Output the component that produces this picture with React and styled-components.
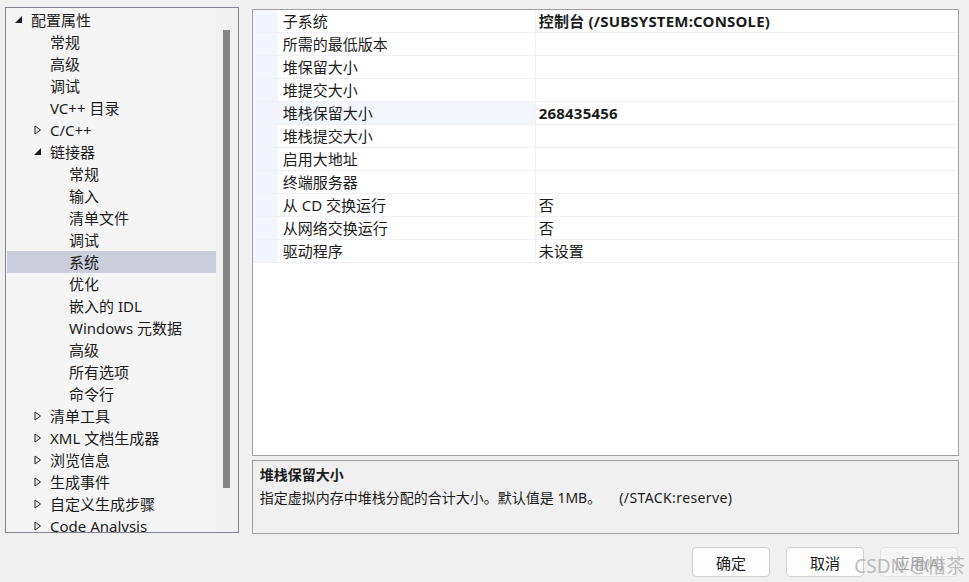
import React from 'react';
import styled, { createGlobalStyle } from 'styled-components';

const GlobalStyle = createGlobalStyle`
  html, body {
    margin: 0;
    padding: 0;
    background: #f0f0f0;
  }
  body {
    font-family: "Noto Sans", "Noto Sans CJK SC", sans-serif;
    font-size: 15px;
    color: #1b1b1b;
  }
`;

const treeItems = [
  { label: '配置属性', level: 0, arrow: 'open' },
  { label: '常规', level: 1 },
  { label: '高级', level: 1 },
  { label: '调试', level: 1 },
  { label: 'VC++ 目录', level: 1 },
  { label: 'C/C++', level: 1, arrow: 'closed' },
  { label: '链接器', level: 1, arrow: 'open' },
  { label: '常规', level: 2 },
  { label: '输入', level: 2 },
  { label: '清单文件', level: 2 },
  { label: '调试', level: 2 },
  { label: '系统', level: 2, selected: true },
  { label: '优化', level: 2 },
  { label: '嵌入的 IDL', level: 2 },
  { label: 'Windows 元数据', level: 2 },
  { label: '高级', level: 2 },
  { label: '所有选项', level: 2 },
  { label: '命令行', level: 2 },
  { label: '清单工具', level: 1, arrow: 'closed' },
  { label: 'XML 文档生成器', level: 1, arrow: 'closed' },
  { label: '浏览信息', level: 1, arrow: 'closed' },
  { label: '生成事件', level: 1, arrow: 'closed' },
  { label: '自定义生成步骤', level: 1, arrow: 'closed' },
  { label: 'Code Analysis', level: 1, arrow: 'closed' },
];

const properties = [
  { name: '子系统', value: '控制台 (/SUBSYSTEM:CONSOLE)', bold: true },
  { name: '所需的最低版本', value: '' },
  { name: '堆保留大小', value: '' },
  { name: '堆提交大小', value: '' },
  { name: '堆栈保留大小', value: '268435456', bold: true, selected: true },
  { name: '堆栈提交大小', value: '' },
  { name: '启用大地址', value: '' },
  { name: '终端服务器', value: '' },
  { name: '从 CD 交换运行', value: '否' },
  { name: '从网络交换运行', value: '否' },
  { name: '驱动程序', value: '未设置' },
];

const Arrow = ({ type }) => {
  if (type === 'open') {
    return (
      <svg width="8" height="8" viewBox="0 0 8 8">
        <polygon points="7,0 7,7 0,7" fill="#1e1e1e" />
      </svg>
    );
  }
  return (
    <svg width="8" height="10" viewBox="0 0 8 10">
      <polygon points="1,1 6.5,5 1,9" fill="none" stroke="#1e1e1e" strokeWidth="1" />
    </svg>
  );
};

const App = () => {
  return (
    <Page>
      <GlobalStyle />
      <Main>
        <TreePanel>
          <TreeList>
            {treeItems.map((item, i) => (
              <TreeRow key={i} $level={item.level} $selected={item.selected}>
                <ArrowSlot>{item.arrow && <Arrow type={item.arrow} />}</ArrowSlot>
                <span>{item.label}</span>
              </TreeRow>
            ))}
          </TreeList>
          <ScrollTrack>
            <ScrollThumb />
          </ScrollTrack>
        </TreePanel>
        <RightColumn>
          <Grid>
            {properties.map((p, i) => (
              <PropRow key={i}>
                <Strip />
                <NameCell $selected={p.selected}>{p.name}</NameCell>
                <ValueCell $bold={p.bold}>{p.value}</ValueCell>
              </PropRow>
            ))}
          </Grid>
          <Description>
            <DescTitle>堆栈保留大小</DescTitle>
            <DescText>
              指定虚拟内存中堆栈分配的合计大小。默认值是 1MB。
              <Switch>(/STACK:reserve)</Switch>
            </DescText>
          </Description>
        </RightColumn>
      </Main>
      <ButtonBar>
        <Button>确定</Button>
        <Button>取消</Button>
        <Button disabled>应用(A)</Button>
        <Watermark>CSDN @惜茶</Watermark>
      </ButtonBar>
    </Page>
  );
};

const Page = styled.div`
  width: 969px;
  height: 582px;
  box-sizing: border-box;
  padding: 7px 10px 0 5px;
  overflow: hidden;
`;

const Main = styled.div`
  display: flex;
  gap: 13px;
`;

const TreePanel = styled.div`
  width: 234px;
  height: 526px;
  box-sizing: border-box;
  border: 1px solid #82878f;
  background: #f5f5f5;
  display: flex;
  overflow: hidden;
`;

const TreeList = styled.div`
  flex: 1;
  padding: 1px 0 0 1px;
  overflow: hidden;
`;

const TreeRow = styled.div`
  height: 22px;
  display: flex;
  align-items: center;
  padding-left: ${(p) => 8 + p.$level * 19}px;
  background: ${(p) => (p.$selected ? '#cccedb' : 'transparent')};
  white-space: nowrap;
  line-height: 22px;
`;

const ArrowSlot = styled.span`
  width: 16px;
  height: 22px;
  flex-shrink: 0;
  display: inline-flex;
  align-items: center;
  justify-content: flex-start;
`;

const ScrollTrack = styled.div`
  width: 22px;
  flex-shrink: 0;
  background: #f0f0f0;
  position: relative;
`;

const ScrollThumb = styled.div`
  position: absolute;
  left: 7px;
  top: 22px;
  width: 7px;
  height: 458px;
  background: #858585;
`;

const RightColumn = styled.div`
  margin-top: 2px;
  width: 708px;
  display: flex;
  flex-direction: column;
  gap: 4px;
`;

const Grid = styled.div`
  height: 447px;
  box-sizing: border-box;
  border: 1px solid #a0a0a0;
  background: #ffffff;
`;

const PropRow = styled.div`
  display: grid;
  grid-template-columns: 25px 258px 1fr;
  height: 23px;
  box-sizing: border-box;
  border-bottom: 1px solid #f0f0f6;
`;

const Strip = styled.div`
  background: #f2f5fb;
`;

const NameCell = styled.div`
  padding-left: 5px;
  line-height: 22px;
  background: ${(p) => (p.$selected ? '#f3f6fb' : '#ffffff')};
  border-right: 1px solid #f0f0f6;
  white-space: nowrap;
`;

const ValueCell = styled.div`
  padding-left: 3px;
  line-height: 22px;
  font-weight: ${(p) => (p.$bold ? 700 : 400)};
  letter-spacing: ${(p) => (p.$bold ? '0.2px' : '0')};
  white-space: nowrap;
`;

const Description = styled.div`
  height: 74px;
  box-sizing: border-box;
  border: 1px solid #a0a0a0;
  background: #f0f0f0;
  padding: 2px 7px;
  font-size: 14px;
`;

const DescTitle = styled.div`
  font-weight: 700;
  line-height: 23px;
`;

const DescText = styled.div`
  line-height: 23px;
  white-space: nowrap;
`;

const Switch = styled.span`
  margin-left: 18px;
  letter-spacing: 0.4px;
`;

const ButtonBar = styled.div`
  position: relative;
  display: flex;
  justify-content: flex-end;
  gap: 16px;
  margin-top: 13px;
  padding-right: 1px;
`;

const Button = styled.button`
  width: 78px;
  height: 30px;
  border: 1px solid ${(p) => (p.disabled ? '#e2e2e2' : '#d0d0d0')};
  border-radius: 4px;
  background: ${(p) => (p.disabled ? '#f5f5f5' : '#fdfdfd')};
  color: ${(p) => (p.disabled ? '#a0a0a0' : '#1b1b1b')};
  font-family: "Noto Sans", "Noto Sans CJK SC", sans-serif;
  font-size: 15px;
  padding: 0;
`;

const Watermark = styled.div`
  position: absolute;
  right: -6px;
  top: 4px;
  font-family: "Noto Sans", "Noto Sans CJK SC", sans-serif;
  font-size: 19px;
  color: rgba(170, 170, 170, 0.75);
  pointer-events: none;
  white-space: nowrap;
`;

export default App;
